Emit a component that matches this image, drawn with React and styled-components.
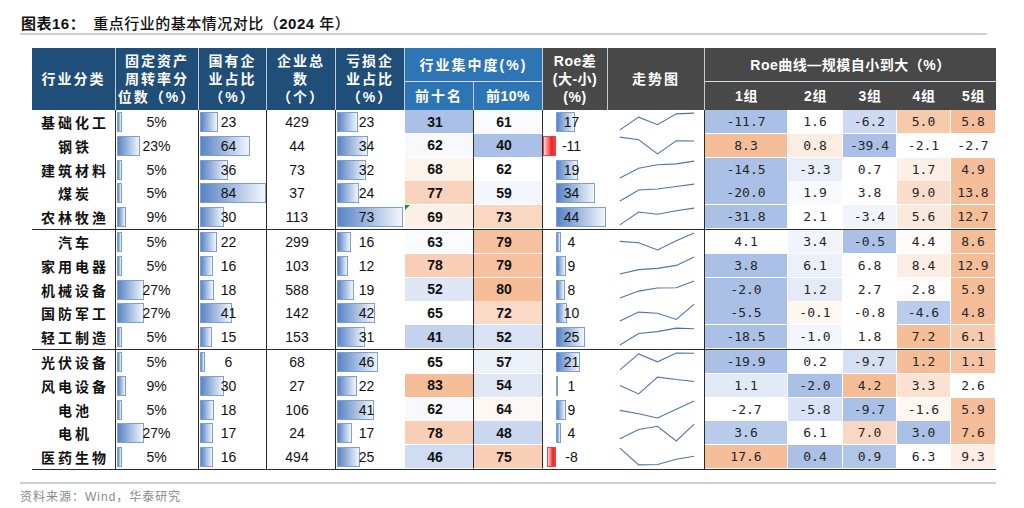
import React from 'react';
import styled, { createGlobalStyle } from 'styled-components';

const COLS = '84px 83px 68px 69px 69px 69px 69px 65px 97px 83px 55px 54px 54px 45px';
const NAVY = '#1f4e79';
const LBLUE = '#2e75b6';
const GRAY = '#484848';
const LINE = '#2b2b2b';
const BLUE = [170, 192, 231];
const PEACH = [246, 189, 153];

const rows = [
  ['基础化工', 5, 23, 429, 23, 31, 61, 17, [-11.7, 1.6, -6.2, 5.0, 5.8]],
  ['钢铁', 23, 64, 44, 34, 62, 40, -11, [8.3, 0.8, -39.4, -2.1, -2.7]],
  ['建筑材料', 5, 36, 73, 32, 68, 62, 19, [-14.5, -3.3, 0.7, 1.7, 4.9]],
  ['煤炭', 5, 84, 37, 24, 77, 59, 34, [-20.0, 1.9, 3.8, 9.0, 13.8]],
  ['农林牧渔', 9, 30, 113, 73, 69, 73, 44, [-31.8, 2.1, -3.4, 5.6, 12.7]],
  ['汽车', 5, 22, 299, 16, 63, 79, 4, [4.1, 3.4, -0.5, 4.4, 8.6]],
  ['家用电器', 5, 16, 103, 12, 78, 79, 9, [3.8, 6.1, 6.8, 8.4, 12.9]],
  ['机械设备', 27, 18, 588, 19, 52, 80, 8, [-2.0, 1.2, 2.7, 2.8, 5.9]],
  ['国防军工', 27, 41, 142, 42, 65, 72, 10, [-5.5, -0.1, -0.8, -4.6, 4.8]],
  ['轻工制造', 5, 15, 153, 31, 41, 52, 25, [-18.5, -1.0, 1.8, 7.2, 6.1]],
  ['光伏设备', 5, 6, 68, 46, 65, 57, 21, [-19.9, 0.2, -9.7, 1.2, 1.1]],
  ['风电设备', 9, 30, 27, 22, 83, 54, 1, [1.1, -2.0, 4.2, 3.3, 2.6]],
  ['电池', 5, 18, 106, 41, 62, 64, 9, [-2.7, -5.8, -9.7, -1.6, 5.9]],
  ['电机', 27, 17, 24, 17, 78, 48, 4, [3.6, 6.1, 7.0, 3.0, 7.6]],
  ['医药生物', 5, 16, 494, 25, 46, 75, -8, [17.6, 0.4, 0.9, 6.3, 9.3]],
];

const mix = (c, t) =>
  `rgb(${c.map((v) => Math.round(255 + (v - 255) * t)).join(',')})`;

const heat = (v, arr) => {
  const s = [...arr].sort((a, b) => a - b);
  const min = s[0];
  const max = s[s.length - 1];
  const med = s[Math.floor(s.length / 2)];
  if (v < med) return mix(BLUE, (med - v) / (med - min));
  if (v > med) return mix(PEACH, (v - med) / (max - med));
  return '#ffffff';
};

const top10 = rows.map((r) => r[5]);
const top10p = rows.map((r) => r[6]);

const Global = createGlobalStyle`
  body { margin: 0; background: #fff; font-family: "Liberation Sans", "Noto Sans CJK SC", sans-serif; }
`;

const Page = styled.div`
  width: 1024px;
  height: 508px;
  overflow: hidden;
`;

const TitleBar = styled.div`
  margin-left: 20px;
  width: 967px;
  height: 35px;
  box-sizing: border-box;
  padding: 14px 0 0 1px;
  border-bottom: 2px solid #c8d2dc;
  font: 500 15px/20px "Liberation Sans", "Noto Sans CJK SC", sans-serif;
  color: #111;
  letter-spacing: 0.5px;
`;

const TitleLead = styled.span`
  font-weight: 700;
  margin-right: 8px;
`;

const TitleYear = styled.span`
  font-weight: 700;
`;

const Table = styled.div`
  margin: 13px 0 0 32px;
  width: 964px;
`;

const Head = styled.div`
  display: grid;
  grid-template-columns: ${COLS};
  grid-template-rows: 34px 28px;
`;

const HCell = styled.div`
  grid-column: ${(p) => p.$col};
  grid-row: ${(p) => p.$row};
  background: ${(p) => p.$bg};
  color: #fff;
  font: 700 14px/18px "Liberation Sans", "Noto Sans CJK SC", sans-serif;
  letter-spacing: ${(p) => (p.$tight ? '0.5px' : '2px')};
  display: flex;
  align-items: center;
  justify-content: center;
  text-align: center;
  box-sizing: border-box;
  border-right: ${(p) => (p.$noRight ? 'none' : '1px solid #c4ccd6')};
  border-bottom: ${(p) => (p.$bb ? '1px solid #d6dce4' : 'none')};
  white-space: pre-line;
`;

const Group = styled.div`
  display: grid;
  grid-template-rows: repeat(5, 1fr);
  height: 120px;
  box-sizing: border-box;
  border-bottom: 1px solid ${LINE};
`;

const Row = styled.div`
  display: grid;
  grid-template-columns: ${COLS};
  min-height: 0;
`;

const Label = styled.div`
  display: flex;
  align-items: center;
  justify-content: center;
  border-right: 1px solid ${LINE};
  font: 700 14px/1 "Noto Sans CJK SC", sans-serif;
  letter-spacing: 3px;
  padding-left: 3px;
  color: #111;
`;

const NumCell = styled.div`
  position: relative;
  display: flex;
  align-items: center;
  justify-content: center;
  padding-right: ${(p) => p.$pr || 8}px;
  box-sizing: border-box;
  border-right: ${(p) => (p.$line ? `1px solid ${LINE}` : 'none')};
  font: ${(p) => (p.$bold ? 700 : 400)} 14px/1 "Liberation Sans", sans-serif;
  color: #111;
`;

const NumText = styled.span`
  position: relative;
  z-index: 1;
`;

const Bar = styled.div`
  position: absolute;
  top: 2px;
  bottom: 2px;
  left: 1px;
  box-sizing: border-box;
  border: 1px solid #7d9fd3;
  background: linear-gradient(to right, #5884c6, #f2f6fc);
`;

const NegBar = styled.div`
  position: absolute;
  top: 2px;
  bottom: 2px;
  box-sizing: border-box;
  border: 1px solid #e04848;
  background: linear-gradient(to right, #ffd2d2, #f02020 70%, #ff4040);
`;

const HeatCell = styled.div`
  display: flex;
  align-items: center;
  justify-content: center;
  padding-right: ${(p) => p.$pr || 0}px;
  box-sizing: border-box;
  background: ${(p) => p.$bg};
  border-bottom: 1px solid #fff;
  border-right: ${(p) => (p.$line ? `1px solid ${LINE}` : '1px solid #fff')};
  font: ${(p) => (p.$mono ? '400 13px/1 "DejaVu Sans Mono", monospace' : '700 14px/1 "Liberation Sans", sans-serif')};
  color: ${(p) => (p.$mono ? '#262626' : '#111')};
  position: relative;
`;

const Flag = styled.div`
  position: absolute;
  left: 0;
  top: 0;
  width: 0;
  height: 0;
  border-top: 5px solid #1f8a3a;
  border-right: 5px solid transparent;
`;

const SparkCell = styled.div`
  border-right: 1px solid ${LINE};
  display: flex;
  align-items: stretch;
`;

const Footer = styled.div`
  margin: 12px 0 0 20px;
  width: 976px;
  border-top: 2px solid #c8d2dc;
  padding-top: 5px;
  font: 12px/16px "Liberation Sans", "Noto Sans CJK SC", sans-serif;
  color: #8a8a8a;
  letter-spacing: 1px;
`;

const Spark = ({ vals }) => {
  const min = Math.min(...vals);
  const max = Math.max(...vals);
  const xs = [12, 31, 50, 69, 87];
  const pts = vals
    .map((v, i) => `${xs[i]},${(20 - ((v - min) / (max - min)) * 17).toFixed(1)}`)
    .join(' ');
  return (
    <svg width="97" height="24" viewBox="0 0 97 24" style={{ display: 'block' }}>
      <polyline points={pts} fill="none" stroke="#5174a8" strokeWidth="1.1" />
    </svg>
  );
};

const BarNum = ({ value, scale, suffix = '', line, pr }) => (
  <NumCell $line={line} $pr={pr}>
    <Bar style={{ width: Math.max(2, value * scale) }} />
    <NumText>
      {value}
      {suffix}
    </NumText>
  </NumCell>
);

const RoeDiff = ({ value }) => {
  const axis = 13;
  const w = Math.max(2, Math.abs(value) * 1.14);
  return (
    <NumCell>
      {value >= 0 ? (
        <Bar style={{ left: axis, width: w }} />
      ) : (
        <NegBar style={{ left: axis - w, width: w }} />
      )}
      <NumText>{value < 0 ? `-${Math.abs(value)}` : value}</NumText>
    </NumCell>
  );
};

const fmt = (v) => (v < 0 ? `-${Math.abs(v).toFixed(1)}` : v.toFixed(1));

const DataRow = ({ r, flag }) => {
  const [name, fix, soe, total, loss, t10, t10p, diff, roe] = r;
  return (
    <Row>
      <Label>{name}</Label>
      <BarNum value={fix} scale={1} suffix="%" line pr={1} />
      <BarNum value={soe} scale={0.785} line />
      <NumCell $line>
        <NumText>{total}</NumText>
      </NumCell>
      <BarNum value={loss} scale={0.9} />
      <HeatCell $bg={heat(t10, top10)} $line $pr={8}>
        {flag && <Flag />}
        {t10}
      </HeatCell>
      <HeatCell $bg={heat(t10p, top10p)} $line $pr={8}>
        {t10p}
      </HeatCell>
      <RoeDiff value={diff} />
      <SparkCell>
        <Spark vals={roe} />
      </SparkCell>
      {roe.map((v, i) => (
        <HeatCell key={i} $mono $bg={heat(v, roe)}>
          {fmt(v)}
        </HeatCell>
      ))}
    </Row>
  );
};

export default function App() {
  const groups = [rows.slice(0, 5), rows.slice(5, 10), rows.slice(10, 15)];
  return (
    <Page>
      <Global />
      <TitleBar>
        <TitleLead>图表16：</TitleLead>
        重点行业的基本情况对比（<TitleYear>2024</TitleYear> 年）
      </TitleBar>
      <Table>
        <Head>
          <HCell $col="1" $row="1 / 3" $bg={NAVY}>行业分类</HCell>
          <HCell $col="2" $row="1 / 3" $bg={NAVY}>{'固定资产\n周转率分\n位数（%）'}</HCell>
          <HCell $col="3" $row="1 / 3" $bg={NAVY}>{'国有企\n业占比\n（%）'}</HCell>
          <HCell $col="4" $row="1 / 3" $bg={NAVY}>{'企业总\n数\n（个）'}</HCell>
          <HCell $col="5" $row="1 / 3" $bg={NAVY}>{'亏损企\n业占比\n（%）'}</HCell>
          <HCell $col="6 / 8" $row="1" $bg={LBLUE} $bb>行业集中度(%)</HCell>
          <HCell $col="6" $row="2" $bg={LBLUE}>前十名</HCell>
          <HCell $col="7" $row="2" $bg={LBLUE} $tight>前10%</HCell>
          <HCell $col="8" $row="1 / 3" $bg={GRAY} $tight>{'Roe差\n(大-小)\n(%)'}</HCell>
          <HCell $col="9" $row="1 / 3" $bg={GRAY}>走势图</HCell>
          <HCell $col="10 / 15" $row="1" $bg={GRAY} $bb $noRight $tight>Roe曲线—规模自小到大（%）</HCell>
          {[1, 2, 3, 4, 5].map((g) => (
            <HCell key={g} $col={`${9 + g}`} $row="2" $bg={GRAY} $noRight $tight>
              {g}组
            </HCell>
          ))}
        </Head>
        {groups.map((g, gi) => (
          <Group key={gi}>
            {g.map((r, ri) => (
              <DataRow key={ri} r={r} flag={gi === 0 && ri === 4} />
            ))}
          </Group>
        ))}
      </Table>
      <Footer>资料来源：Wind，华泰研究</Footer>
    </Page>
  );
}
